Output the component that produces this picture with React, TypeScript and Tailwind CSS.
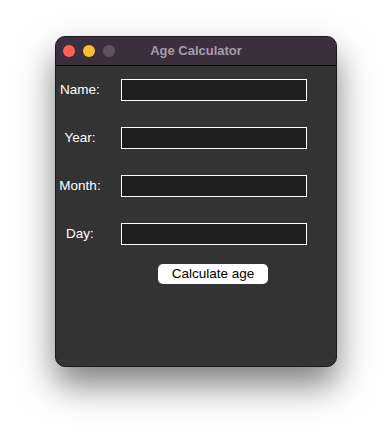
// Age Calculator window, macOS dark style.

const fields = ["Name:", "Year:", "Month:", "Day:"];

export default function App() {
  return (
    <div className="min-h-[440px] w-[392px] bg-white pt-[36px] pl-[55px] font-['Liberation_Sans',Arial,sans-serif]">
      <div className="flex h-[331px] w-[282px] flex-col overflow-hidden rounded-[10px] border border-[#1a1a1a] bg-[#333333] shadow-[0_18px_34px_rgba(0,0,0,0.5)]">
        <div className="relative flex h-[29px] shrink-0 items-center border-b border-black bg-[#3b2f3e] pl-[7px]">
          <div className="flex gap-[8px]">
            <span className="h-[12px] w-[12px] rounded-full bg-[#fe5f57]" />
            <span className="h-[12px] w-[12px] rounded-full bg-[#febc2e]" />
            <span className="h-[12px] w-[12px] rounded-full bg-[#5d5360]" />
          </div>
          <span className="absolute inset-x-0 text-center text-[13px] font-bold text-[#a99bac]">
            Age Calculator
          </span>
        </div>
        <div className="flex flex-col gap-[26px] pt-[13px]">
          {fields.map((f) => (
            <div key={f} className="flex items-center">
              <label className="w-[48px] text-center text-[13.5px] text-white">{f}</label>
              <input
                type="text"
                className="ml-[17px] h-[22px] w-[186px] border border-white bg-[#1e1e1e] px-1 text-[13px] text-white outline-none"
              />
            </div>
          ))}
        </div>
        <button
          type="button"
          className="ml-[102px] mt-[19px] h-[20px] w-[110px] rounded-[5px] bg-white text-[13.5px] text-black"
        >
          Calculate age
        </button>
      </div>
    </div>
  );
}
